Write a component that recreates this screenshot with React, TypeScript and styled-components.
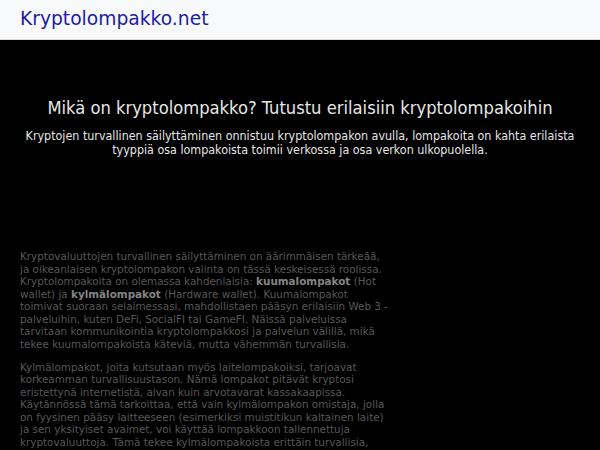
import React from "react";
import styled, { createGlobalStyle } from "styled-components";

const Global = createGlobalStyle`
  html, body { margin: 0; padding: 0; background: #000; }
  body { font-family: "DejaVu Sans", Verdana, sans-serif; }
`;

const Header = styled.header`
  height: 39px;
  background: #f8f9fa;
  border-bottom: 1px solid #d8d8d8;
  display: flex;
  align-items: center;
  padding: 0 20px;
`;

const Brand = styled.a`
  font-family: "DejaVu Sans", sans-serif;
  font-size: 18.7px;
  color: #1d1da3;
  text-decoration: none;
  line-height: 1;
  margin-top: -1px;
`;

const Hero = styled.section`
  padding: 57px 20px 0;
  text-align: center;
`;

const Title = styled.h1`
  margin: 0;
  font-family: "DejaVu Sans", sans-serif;
  font-stretch: condensed;
  font-weight: normal;
  font-size: 18.2px;
  line-height: 22px;
  color: #e6e6e6;
`;

const Lead = styled.p`
  margin: 10px 0 0;
  font-family: "DejaVu Sans", sans-serif;
  font-stretch: condensed;
  font-size: 12.4px;
  line-height: 14px;
  color: #e6e6e6;
`;

const Content = styled.main`
  padding: 93px 20px 0;
  width: 372px;
`;

const Para = styled.p`
  margin: 0 0 10.5px;
  font-size: 10.4px;
  line-height: 12.5px;
  color: #575757;
  & b { color: #858585; }
`;

export default function App() {
  return (
    <>
      <Global />
      <Header>
        <Brand href="#">Kryptolompakko.net</Brand>
      </Header>
      <Hero>
        <Title>Mikä on kryptolompakko? Tutustu erilaisiin kryptolompakoihin</Title>
        <Lead>
          Kryptojen turvallinen säilyttäminen onnistuu kryptolompakon avulla, lompakoita on kahta erilaista
          <br />
          tyyppiä osa lompakoista toimii verkossa ja osa verkon ulkopuolella.
        </Lead>
      </Hero>
      <Content>
        <Para>
          Kryptovaluuttojen turvallinen säilyttäminen on äärimmäisen tärkeää, ja oikeanlaisen kryptolompakon
          valinta on tässä keskeisessä roolissa. Kryptolompakoita on olemassa kahdenlaisia: <b>kuumalompakot</b>{" "}
          (Hot wallet) ja <b>kylmälompakot</b> (Hardware wallet). Kuumalompakot toimivat suoraan selaimessasi,
          mahdollistaen pääsyn erilaisiin Web 3 -palveluihin, kuten DeFi, SocialFI tai GameFI. Näissä
          palveluissa tarvitaan kommunikointia kryptolompakkosi ja palvelun välillä, mikä tekee kuumalompakoista
          käteviä, mutta vähemmän turvallisia.
        </Para>
        <Para>
          Kylmälompakot, joita kutsutaan myös laitelompakoiksi, tarjoavat korkeamman turvallisuustason. Nämä
          lompakot pitävät kryptosi eristettynä internetistä, aivan kuin arvotavarat kassakaapissa.
          Käytännössä tämä tarkoittaa, että vain kylmälompakon omistaja, jolla on fyysinen pääsy laitteeseen
          (esimerkiksi muistitikun kaltainen laite) ja sen yksityiset avaimet, voi käyttää lompakkoon
          tallennettuja kryptovaluuttoja. Tämä tekee kylmälompakoista erittäin turvallisia, mutta
          hankalampia käyttää jokapäiväisissä transaktioissa.
        </Para>
      </Content>
    </>
  );
}
